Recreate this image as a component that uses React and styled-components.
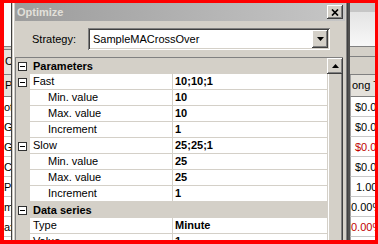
import styled, { createGlobalStyle } from "styled-components";

const GlobalStyle = createGlobalStyle`
  html, body {
    margin: 0;
    padding: 0;
    background: #fff;
  }
  body {
    font-family: "Liberation Sans", Arial, sans-serif;
    font-size: 11px;
    color: #000;
  }
`;

const Frame = styled.div`
  width: 378px;
  height: 244px;
  box-sizing: border-box;
  border: 3px solid #f00;
  border-left-width: 4px;
  border-bottom-width: 4px;
  display: flex;
  overflow: hidden;
  background: #d4d0c8;
`;

/* background window, visible on both sides of the dialog */
const Strip = styled.div`
  width: ${(p) => p.$w}px;
  flex: none;
  display: flex;
  flex-direction: column;
  overflow: hidden;
  background: #fff;
  box-sizing: border-box;
  ${(p) =>
    p.$side === "left"
      ? "border-right: 1px solid #404040;"
      : "border-left: 2px solid #505050;"}
`;

const StripTop = styled.div`
  height: 43px;
  flex: none;
  border-bottom: 1px solid #808080;
  background: ${(p) =>
    p.$band
      ? "linear-gradient(#c6c6c6 0 9px, #e4e4e4 9px, #f8f8f8)"
      : "#fcfcfc"};
`;

const StripBar = styled.div`
  height: 27px;
  flex: none;
  border-bottom: 1px solid #808080;
  background: ${(p) =>
    p.$split
      ? "linear-gradient(#d4d0c8 0 9px, #808080 9px 10px, #d4d0c8 10px)"
      : "linear-gradient(#d4d0c8 0 2px, #808080 2px 3px, #e6e3de 3px)"};
  line-height: 28px;
  white-space: nowrap;
  padding-left: 1px;
`;

const StripHead = styled.div`
  height: 21px;
  flex: none;
  border-bottom: 1px solid #808080;
  background: #e4e1db;
  line-height: 21px;
  white-space: nowrap;
  padding-left: 1px;
  ${(p) => p.$cell && "border-left: 1px solid #a0a0a0;"}
`;

const StripCell = styled.div`
  height: 19px;
  flex: none;
  border-bottom: 1px solid #c8c8c8;
  line-height: 20px;
  white-space: nowrap;
  padding-left: ${(p) => p.$pad || 0}px;
  color: ${(p) => (p.$red ? "#c00000" : "#000")};
  ${(p) => p.$cell && "border-left: 1px solid #a0a0a0;"}
`;

const Dialog = styled.div`
  width: 336px;
  flex: none;
  box-sizing: border-box;
  display: flex;
  flex-direction: column;
  background: #d4d0c8;
  border-left: 1px solid #d4d0c8;
  border-right: 1px solid #404040;
  box-shadow: inset 1px 0 #fff, inset -1px 0 #808080;
  padding: 0 2px;
  overflow: hidden;
`;

const TitleBar = styled.div`
  height: 18px;
  flex: none;
  display: flex;
  align-items: center;
  padding: 0 2px;
  background: linear-gradient(to right, #9c9c9c, #c6c6c6);
`;

const TitleText = styled.span`
  font-weight: bold;
  color: #e2e0da;
`;

const raised = `
  background: #d4d0c8;
  box-shadow: inset -1px -1px #404040, inset 1px 1px #fff,
    inset -2px -2px #808080, inset 2px 2px #d4d0c8;
`;

const CloseButton = styled.div`
  width: 16px;
  height: 14px;
  margin-left: auto;
  display: flex;
  align-items: center;
  justify-content: center;
  ${raised}
`;

const StrategyRow = styled.div`
  margin-top: 7px;
  height: 22px;
  flex: none;
  display: flex;
  align-items: center;
  padding-left: 17px;
`;

const Label = styled.span`
  width: 56px;
`;

const Combo = styled.div`
  width: 242px;
  height: 22px;
  box-sizing: border-box;
  background: #fff;
  display: flex;
  align-items: center;
  padding: 2px 2px 2px 5px;
  box-shadow: inset 1px 1px #808080, inset -1px -1px #fff,
    inset 2px 2px #404040, inset -2px -2px #d4d0c8;
`;

const ComboText = styled.span`
  flex: 1;
`;

const SmallButton = styled.div`
  width: 16px;
  height: ${(p) => p.$h}px;
  flex: none;
  display: flex;
  align-items: center;
  justify-content: center;
  ${raised}
`;

const Grid = styled.div`
  margin-top: 7px;
  margin-right: 2px;
  flex: 1;
  min-height: 0;
  display: flex;
  border-top: 1px solid #808080;
  border-left: 1px solid #808080;
  overflow: hidden;
`;

const Rows = styled.div`
  flex: 1;
  display: flex;
  flex-direction: column;
  background: #fff;
`;

const Row = styled.div`
  height: 16px;
  flex: none;
  display: flex;
`;

const Gutter = styled.div`
  width: 14px;
  flex: none;
  background: #d4d0c8;
  display: flex;
  align-items: center;
  padding-left: 2px;
  box-sizing: border-box;
`;

const Toggle = styled.span`
  width: 9px;
  height: 9px;
  box-sizing: border-box;
  border: 1px solid #303030;
  background: #fff;
  display: flex;
  align-items: center;
  justify-content: center;
  &::after {
    content: "";
    width: 5px;
    height: 1px;
    background: #000;
  }
`;

const Category = styled.div`
  flex: 1;
  background: #d4d0c8;
  font-weight: bold;
  line-height: 16px;
  padding-left: 3px;
`;

const Name = styled.div`
  width: 142px;
  flex: none;
  box-sizing: border-box;
  border-bottom: 1px solid #d4d0c8;
  line-height: 15px;
  padding-left: ${(p) => (p.$child ? 18 : 3)}px;
  white-space: nowrap;
`;

const Value = styled.div`
  flex: 1;
  border-left: 1px solid #d4d0c8;
  border-bottom: 1px solid #d4d0c8;
  line-height: 15px;
  padding-left: 2px;
  font-weight: bold;
`;

const Scrollbar = styled.div`
  width: 16px;
  flex: none;
  display: flex;
  flex-direction: column;
`;

const Thumb = styled.div`
  flex: 1;
  background: #d4d0c8;
  box-shadow: inset -1px 0 #404040, inset 1px 0 #d4d0c8,
    inset -2px 0 #808080, inset 2px 0 #fff;
`;

const Arrow = ({ up }) => (
  <svg width="7" height="4" viewBox="0 0 7 4">
    <polygon points={up ? "0,4 7,4 3.5,0" : "0,0 7,0 3.5,4"} fill="#000" />
  </svg>
);

const rows = [
  { cat: "Parameters" },
  { name: "Fast", value: "10;10;1", toggle: true },
  { name: "Min. value", value: "10", child: true },
  { name: "Max. value", value: "10", child: true },
  { name: "Increment", value: "1", child: true },
  { name: "Slow", value: "25;25;1", toggle: true },
  { name: "Min. value", value: "25", child: true },
  { name: "Max. value", value: "25", child: true },
  { name: "Increment", value: "1", child: true },
  { cat: "Data series" },
  { name: "Type", value: "Minute" },
  { name: "Value", value: "1" },
];

const leftCells = ["ota", "Gr", "Gr", "Co", "Pr", "m", "ax.", "Mi"];
const rightCells = [
  { t: "$0.00", pad: 4 },
  { t: "$0.00", pad: 4 },
  { t: "$0.00", pad: 4, red: true },
  { t: "$0.00", pad: 4 },
  { t: "1.00", pad: 5 },
  { t: "0.00%", pad: 0 },
  { t: "0.00%", pad: 0, red: true },
  { t: "", pad: 0 },
];

export default function App() {
  return (
    <>
      <GlobalStyle />
      <Frame>
        <Strip $w={8} $side="left">
          <StripTop />
          <StripBar>Ch</StripBar>
          <StripHead>Pe</StripHead>
          {leftCells.map((t, i) => (
            <StripCell key={i}>{t}</StripCell>
          ))}
        </Strip>

        <Dialog>
          <TitleBar>
            <TitleText>Optimize</TitleText>
            <CloseButton>
              <svg width="8" height="7" viewBox="0 0 8 7">
                <path
                  d="M1 0.5 L7 6.5 M7 0.5 L1 6.5"
                  stroke="#000"
                  strokeWidth="1.7"
                />
              </svg>
            </CloseButton>
          </TitleBar>

          <StrategyRow>
            <Label>Strategy:</Label>
            <Combo>
              <ComboText>SampleMACrossOver</ComboText>
              <SmallButton $h={18}>
                <Arrow />
              </SmallButton>
            </Combo>
          </StrategyRow>

          <Grid>
            <Rows>
              {rows.map((r, i) =>
                r.cat ? (
                  <Row key={i}>
                    <Gutter>
                      <Toggle />
                    </Gutter>
                    <Category>{r.cat}</Category>
                  </Row>
                ) : (
                  <Row key={i}>
                    <Gutter>{r.toggle && <Toggle />}</Gutter>
                    <Name $child={r.child}>{r.name}</Name>
                    <Value>{r.value}</Value>
                  </Row>
                )
              )}
            </Rows>
            <Scrollbar>
              <SmallButton $h={16}>
                <Arrow up />
              </SmallButton>
              <Thumb />
            </Scrollbar>
          </Grid>
        </Dialog>

        <Strip $w={27} $side="right">
          <StripTop $band />
          <StripBar $split />
          <StripHead $cell>ong Tr</StripHead>
          {rightCells.map((c, i) => (
            <StripCell key={i} $cell $pad={c.pad} $red={c.red}>
              {c.t}
            </StripCell>
          ))}
        </Strip>
      </Frame>
    </>
  );
}
